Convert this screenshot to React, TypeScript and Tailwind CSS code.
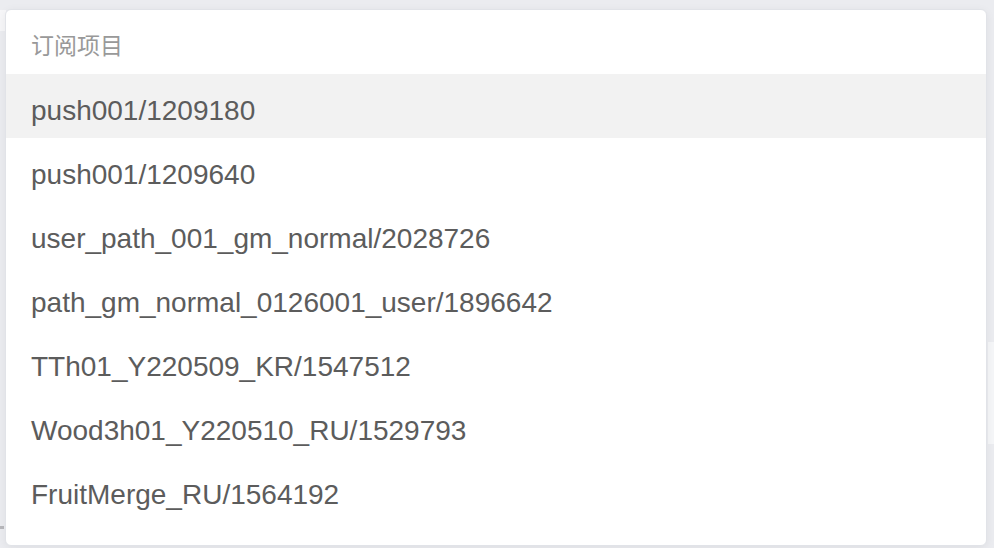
import React from 'react';

const items = [
  'push001/1209180',
  'push001/1209640',
  'user_path_001_gm_normal/2028726',
  'path_gm_normal_0126001_user/1896642',
  'TTh01_Y220509_KR/1547512',
  'Wood3h01_Y220510_RU/1529793',
  'FruitMerge_RU/1564192',
];

export default function App() {
  const active = 0;

  return (
    <div
      className="relative w-[994px] h-[548px] overflow-hidden bg-[#ebecf0]"
      style={{ fontFamily: '"Liberation Sans", "Noto Sans CJK SC", sans-serif' }}
    >
      {/* page content peeking out behind the dropdown */}
      <div className="absolute left-0 top-[10px] w-[6px] h-[21px] bg-[#f6f6f8]" />
      <div className="absolute left-0 top-[526px] w-[4px] h-[3px] bg-[#b8b8bc]" />
      <div className="absolute right-0 top-[342px] w-[6px] h-[102px] bg-[#f5f6f8]" />

      {/* Dropdown */}
      <div className="absolute left-[5px] top-[9px] w-[982px] h-[537px] rounded-[6px] border border-[#e1e3e8] bg-white shadow-[0_2px_10px_rgba(0,0,0,0.06)] overflow-hidden">
        <div className="h-[64px] flex items-center pt-[9px] pl-[25px] text-[23px] text-[#999999]">
          订阅项目
        </div>
        <ul>
          {items.map((item, i) => (
            <li
              key={item}
              className={`h-[64px] flex items-center pt-[9px] pl-[25px] text-[28px] text-[#5c5c5c] ${
                i === active ? 'bg-[#f2f2f2]' : ''
              }`}
            >
              {item}
            </li>
          ))}
        </ul>
      </div>
    </div>
  );
}
